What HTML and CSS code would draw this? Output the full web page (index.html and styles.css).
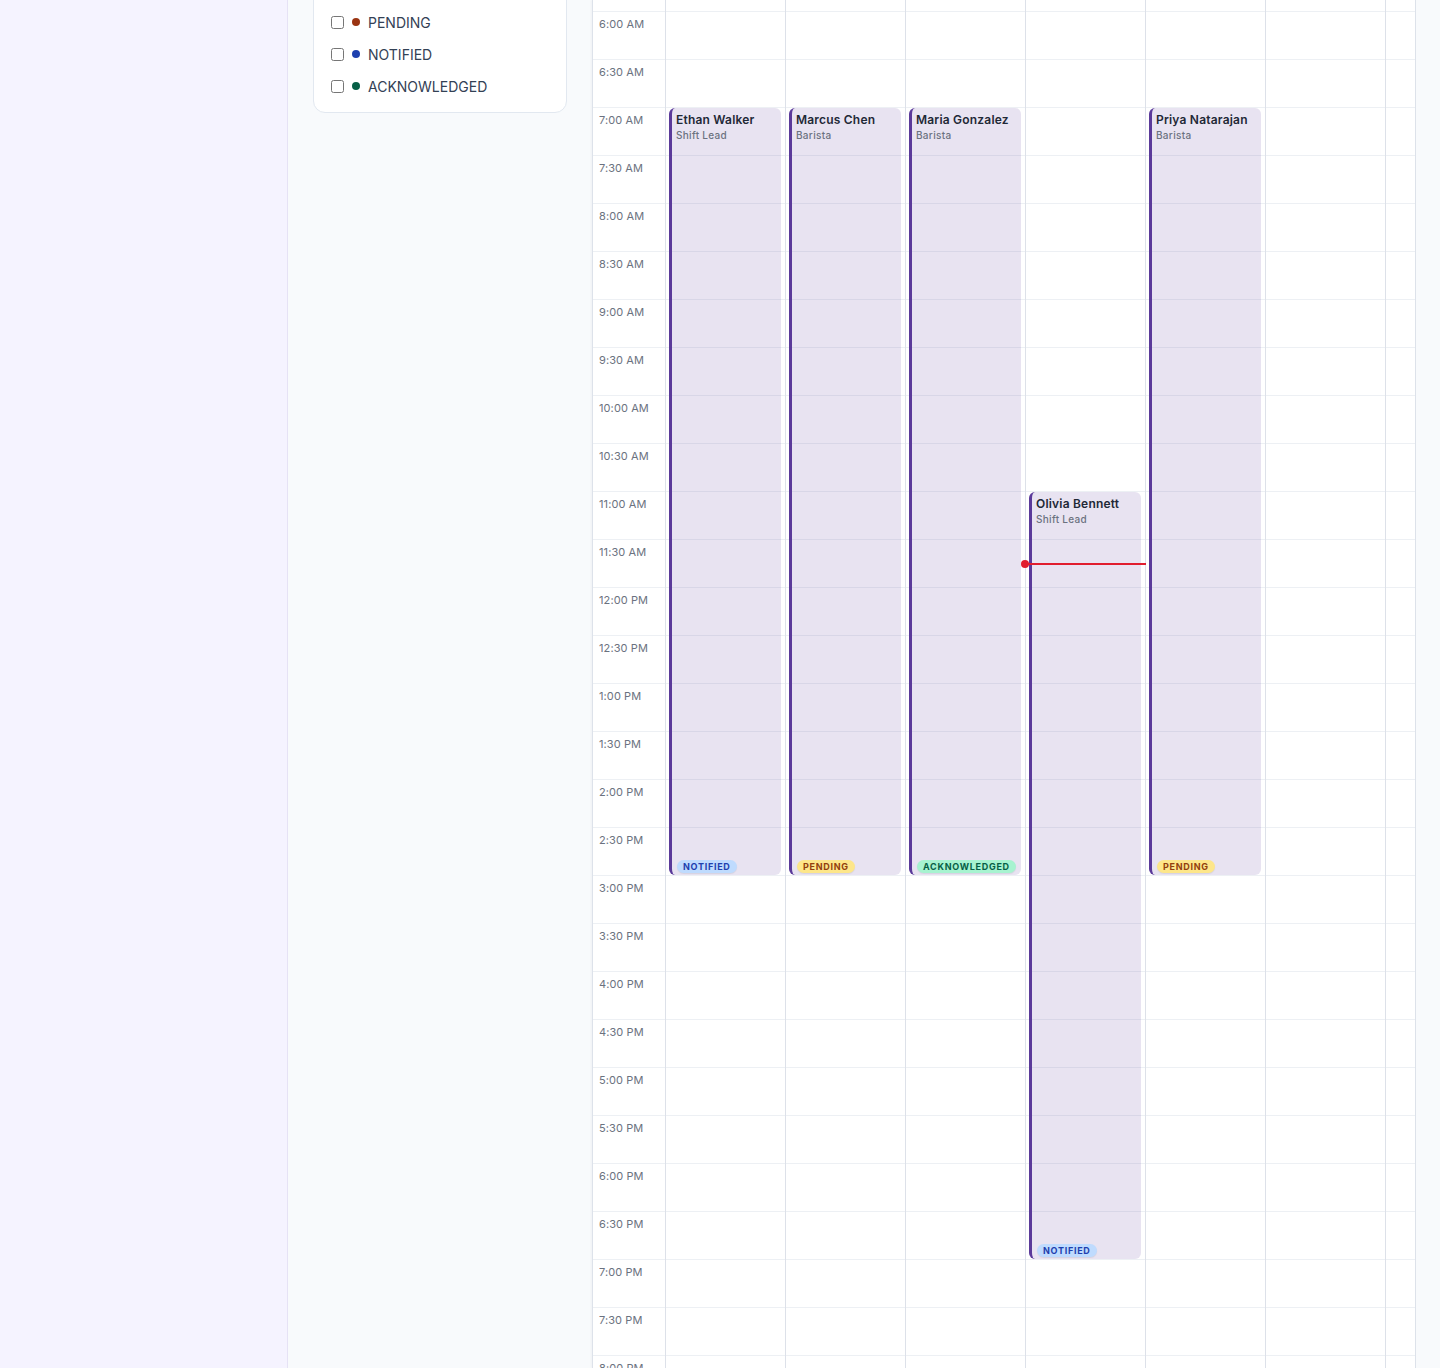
FILE: index.html
```html
<!DOCTYPE html>
<html lang="en">
<head>
<meta charset="utf-8">
<title>Schedule</title>
<link rel="stylesheet" href="styles.css">
</head>
<body>
<div class="app">
  <aside class="sidebar"></aside>
  <main class="main">
    <section class="legend">
      <label class="legend-item"><input type="checkbox"><span class="dot dot-pending"></span><span>PENDING</span></label>
      <label class="legend-item"><input type="checkbox"><span class="dot dot-notified"></span><span>NOTIFIED</span></label>
      <label class="legend-item"><input type="checkbox"><span class="dot dot-ack"></span><span>ACKNOWLEDGED</span></label>
    </section>

    <section class="calendar">
      <div class="cal-body">
        <div class="time-col">
          <div class="slot"></div>
          <div class="slot"><span class="t">6:00 AM</span></div>
          <div class="slot"><span class="t">6:30 AM</span></div>
          <div class="slot"><span class="t">7:00 AM</span></div>
          <div class="slot"><span class="t">7:30 AM</span></div>
          <div class="slot"><span class="t">8:00 AM</span></div>
          <div class="slot"><span class="t">8:30 AM</span></div>
          <div class="slot"><span class="t">9:00 AM</span></div>
          <div class="slot"><span class="t">9:30 AM</span></div>
          <div class="slot"><span class="t">10:00 AM</span></div>
          <div class="slot"><span class="t">10:30 AM</span></div>
          <div class="slot"><span class="t">11:00 AM</span></div>
          <div class="slot"><span class="t">11:30 AM</span></div>
          <div class="slot"><span class="t">12:00 PM</span></div>
          <div class="slot"><span class="t">12:30 PM</span></div>
          <div class="slot"><span class="t">1:00 PM</span></div>
          <div class="slot"><span class="t">1:30 PM</span></div>
          <div class="slot"><span class="t">2:00 PM</span></div>
          <div class="slot"><span class="t">2:30 PM</span></div>
          <div class="slot"><span class="t">3:00 PM</span></div>
          <div class="slot"><span class="t">3:30 PM</span></div>
          <div class="slot"><span class="t">4:00 PM</span></div>
          <div class="slot"><span class="t">4:30 PM</span></div>
          <div class="slot"><span class="t">5:00 PM</span></div>
          <div class="slot"><span class="t">5:30 PM</span></div>
          <div class="slot"><span class="t">6:00 PM</span></div>
          <div class="slot"><span class="t">6:30 PM</span></div>
          <div class="slot"><span class="t">7:00 PM</span></div>
          <div class="slot"><span class="t">7:30 PM</span></div>
          <div class="slot"><span class="t">8:00 PM</span></div>
          <div class="slot"></div>
        </div>

        <div class="day-col" id="d1">
          <div class="event" style="top:145px;height:767px">
            <div class="ev-head"><div class="ev-name">Ethan Walker</div><div class="ev-role">Shift Lead</div></div>
            <span class="badge badge-notified">NOTIFIED</span>
          </div>
        </div>
        <div class="day-col" id="d2">
          <div class="event" style="top:145px;height:767px">
            <div class="ev-head"><div class="ev-name">Marcus Chen</div><div class="ev-role">Barista</div></div>
            <span class="badge badge-pending">PENDING</span>
          </div>
        </div>
        <div class="day-col" id="d3">
          <div class="event" style="top:145px;height:767px">
            <div class="ev-head"><div class="ev-name">Maria Gonzalez</div><div class="ev-role">Barista</div></div>
            <span class="badge badge-ack">ACKNOWLEDGED</span>
          </div>
        </div>
        <div class="day-col" id="d4">
          <div class="event" style="top:529px;height:767px">
            <div class="ev-head"><div class="ev-name">Olivia Bennett</div><div class="ev-role">Shift Lead</div></div>
            <span class="badge badge-notified">NOTIFIED</span>
          </div>
          <div class="now-line" style="top:600px"></div>
        </div>
        <div class="day-col" id="d5">
          <div class="event" style="top:145px;height:767px">
            <div class="ev-head"><div class="ev-name">Priya Natarajan</div><div class="ev-role">Barista</div></div>
            <span class="badge badge-pending">PENDING</span>
          </div>
        </div>
        <div class="day-col" id="d6"></div>
        <div class="day-col" id="d7"></div>
      </div>
    </section>
  </main>
</div>
<script>
(function () {
  var cols = document.querySelectorAll('.day-col');
  for (var c = 0; c < cols.length; c++) {
    var frag = document.createDocumentFragment();
    for (var i = 0; i < 31; i++) {
      var s = document.createElement('div');
      s.className = 'slot';
      frag.appendChild(s);
    }
    cols[c].insertBefore(frag, cols[c].firstChild);
  }
})();
</script>
</body>
</html>
```

FILE: styles.css
```css
* { box-sizing: border-box; }
html, body {
  margin: 0;
  padding: 0;
  height: 100%;
  overflow: hidden;
  font-family: Inter, "Noto Sans", "Liberation Sans", sans-serif;
}
.app {
  display: flex;
  height: 100%;
  background: #f8fafc;
}
.sidebar {
  width: 288px;
  flex: 0 0 288px;
  background: #f5f3ff;
  border-right: 1px solid #e6e2f5;
}
.main {
  display: flex;
  align-items: flex-start;
  gap: 25px;
  padding: 0 24px 0 25px;
  flex: 1;
  min-width: 0;
}
.legend {
  width: 254px;
  flex: 0 0 254px;
  margin-top: -40px;
  padding: 45px 16px 10px 17px;
  background: #fff;
  border: 1px solid #e2e8f0;
  border-radius: 12px;
  display: flex;
  flex-direction: column;
}
.legend-item {
  display: flex;
  align-items: center;
  height: 32px;
  font-size: 14px;
  color: #334155;
}
.legend-item input {
  margin: 0 8px 0 0;
  width: 13px;
  height: 13px;
}
.dot {
  width: 8px;
  height: 8px;
  border-radius: 50%;
  margin-right: 8px;
}
.dot-pending { background: #9a3412; }
.dot-notified { background: #1e40af; }
.dot-ack { background: #065f46; }

.calendar {
  width: 824px;
  flex: 0 0 824px;
  height: 1368px;
  background: #fff;
  border-left: 1px solid #dde2ea;
  border-right: 1px solid #dde2ea;
  overflow: hidden;
  box-shadow: -1px 0 2px rgba(15, 23, 42, 0.04);
}
.cal-body {
  display: flex;
  margin-top: -37px;
}
.time-col {
  width: 73px;
  flex: 0 0 73px;
  border-right: 1px solid #dde1e9;
}
.slot {
  height: 48px;
  border-top: 1px solid #edf0f4;
}
.time-col .slot {
  padding: 6px 0 0 6px;
}
.t {
  display: block;
  font-size: 11px;
  line-height: 13px;
  color: #6b7280;
  letter-spacing: 0.1px;
}
.day-col {
  position: relative;
  width: 120px;
  flex: 0 0 120px;
  border-right: 1px solid #dde1e9;
}
.event {
  position: absolute;
  left: 3px;
  right: 4px;
  background: rgba(91, 58, 154, 0.14);
  border-left: 3px solid #5b3a9a;
  border-radius: 6px;
  padding: 4px 5px 2px 4px;
  display: flex;
  flex-direction: column;
  justify-content: space-between;
  align-items: flex-start;
  overflow: hidden;
}
.ev-name {
  font-size: 12px;
  line-height: 15px;
  font-weight: 600;
  color: #1f2937;
  letter-spacing: 0.2px;
  white-space: nowrap;
}
.ev-role {
  margin-top: 1px;
  font-size: 10px;
  line-height: 14px;
  font-weight: 500;
  color: #6b7280;
  letter-spacing: 0.3px;
}
.badge {
  margin-left: 1px;
  display: inline-block;
  height: 13px;
  line-height: 13px;
  padding: 0 6px;
  border-radius: 7px;
  font-size: 9px;
  font-weight: 700;
  letter-spacing: 0.08em;
  box-shadow: 0 1px 1px rgba(15, 23, 42, 0.08);
}
.badge-notified { background: #bfdbfe; color: #1e40af; }
.badge-pending { background: #fde68a; color: #92400e; }
.badge-ack { background: #a7f3d0; color: #065f46; }

.now-line {
  position: absolute;
  left: -1px;
  right: -1px;
  height: 2px;
  background: #e11d2e;
  z-index: 2;
}
.now-line::before {
  content: "";
  position: absolute;
  left: -4px;
  top: -3px;
  width: 8px;
  height: 8px;
  border-radius: 50%;
  background: #e11d2e;
}
```
